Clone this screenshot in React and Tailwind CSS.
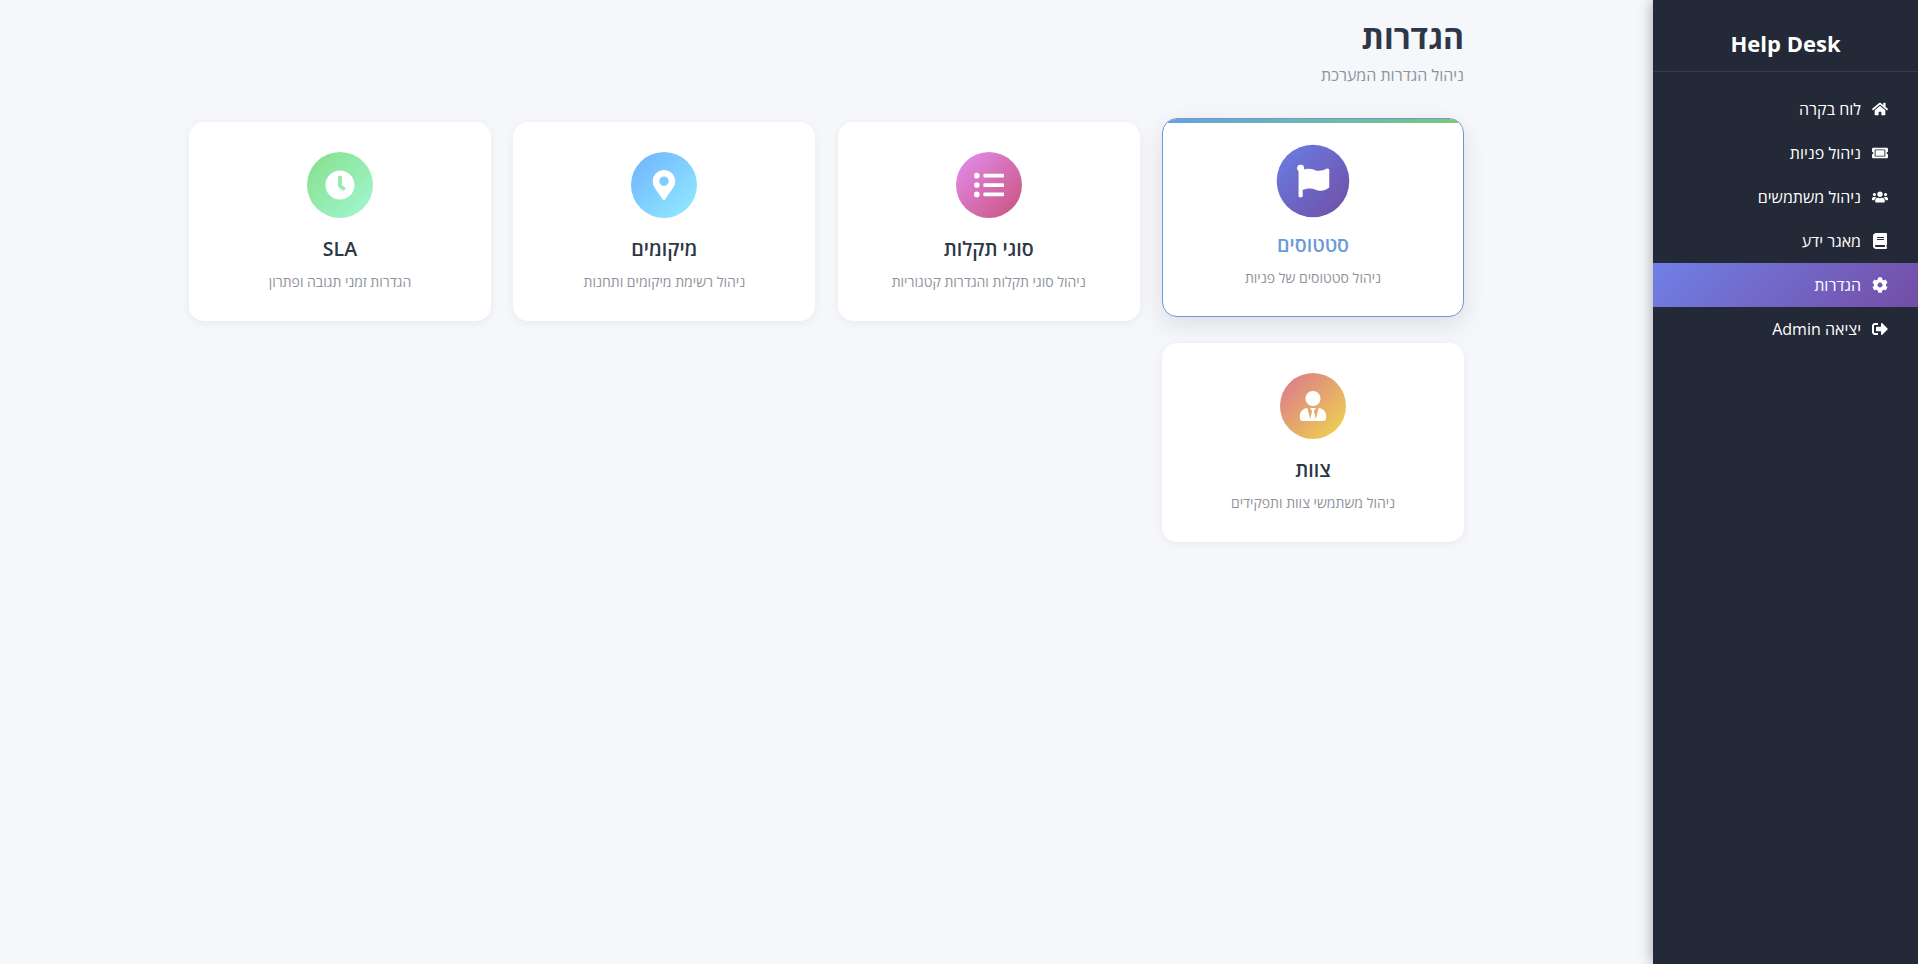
import React from 'react'
import { FaHome, FaTicketAlt, FaUsers, FaBook, FaCog, FaSignOutAlt, FaFlag, FaListUl, FaMapMarkerAlt, FaClock, FaUserTie } from 'react-icons/fa'

const NAV = [
  { Icon: FaHome, label: 'לוח בקרה' },
  { Icon: FaTicketAlt, label: 'ניהול פניות' },
  { Icon: FaUsers, label: 'ניהול משתמשים' },
  { Icon: FaBook, label: 'מאגר ידע' },
  { Icon: FaCog, label: 'הגדרות', active: true },
  { Icon: FaSignOutAlt, label: 'יציאה Admin' },
]

const CARDS = [
  { Icon: FaFlag, title: 'סטטוסים', desc: 'ניהול סטטוסים של פניות', grad: 'bg-[linear-gradient(135deg,#6a7fe6,#6f4da3)]', hovered: true },
  { Icon: FaListUl, title: 'סוגי תקלות', desc: 'ניהול סוגי תקלות והגדרות קטגוריות', grad: 'bg-[linear-gradient(135deg,#e48ef0,#c8527a)]' },
  { Icon: FaMapMarkerAlt, title: 'מיקומים', desc: 'ניהול רשימת מיקומים ותחנות', grad: 'bg-[linear-gradient(135deg,#6fb1ff,#93edff)]' },
  { Icon: FaClock, title: 'SLA', desc: 'הגדרות זמני תגובה ופתרון', grad: 'bg-[linear-gradient(135deg,#84e08a,#a2f7d2)]' },
  { Icon: FaUserTie, title: 'צוות', desc: 'ניהול משתמשי צוות ותפקידים', grad: 'bg-[linear-gradient(135deg,#dc7390,#efd94a)]' },
]

function Card({ Icon, title, desc, grad, hovered }) {
  return (
    <div
      className={`relative overflow-hidden rounded-[15px] bg-white border px-6 pt-[29px] pb-[28px] text-center flex flex-col items-center ${
        hovered
          ? '-translate-y-1 border-[#6b9bd6] shadow-[0_8px_24px_rgba(0,0,0,0.1)]'
          : 'border-transparent shadow-[0_2px_10px_rgba(0,0,0,0.06)]'
      }`}
    >
      {hovered && <div className="absolute top-0 inset-x-0 h-1 bg-gradient-to-r from-[#6a9fdc] to-[#7cc873]" />}
      <div
        className={`w-[66px] h-[66px] rounded-full ${grad} flex items-center justify-center text-white text-[30px] ${
          hovered ? 'scale-110' : ''
        }`}
      >
        <Icon />
      </div>
      <h3 className={`mt-[17px] text-[19.6px] leading-[28px] font-semibold ${hovered ? 'text-[#6a9bd8]' : 'text-[#2d3748]'}`}>{title}</h3>
      <p className="mt-[9px] text-[14px] leading-[20px] text-[#8f939b]">{desc}</p>
    </div>
  )
}

export default function App() {
  return (
    <div dir="rtl" className="flex h-screen overflow-hidden bg-[#f5f7fb] font-['Open_Sans','Noto_Sans','Liberation_Sans',sans-serif]">
      {/* תפריט צד */}
      <aside className="w-[265px] shrink-0 bg-[#232936] text-white shadow-[0_0_14px_rgba(0,0,0,0.35)]">
        <div className="h-[72px] pt-[15px] flex items-center justify-center border-b border-[#353b49]">
          <h2 className="text-[22px] font-bold" dir="ltr">Help Desk</h2>
        </div>
        <nav className="pt-[15px]">
          {NAV.map(({ Icon, label, active }) => (
            <div
              key={label}
              className={`h-11 pr-7 flex items-center gap-[9px] text-[16px] font-medium ${
                active ? 'bg-[linear-gradient(135deg,#7080e6,#744da6)]' : ''
              }`}
            >
              <span className="w-5 flex justify-center text-base shrink-0"><Icon /></span>
              <span>{label}</span>
            </div>
          ))}
        </nav>
      </aside>

      {/* תוכן */}
      <main className="flex-1 min-w-0">
        <div className="w-[1275px] mx-auto pt-[16px]">
          <h1 className="text-[32px] leading-[42px] font-bold text-[#2d3748]">הגדרות</h1>
          <p className="mt-[5px] text-[16px] leading-[24px] text-[#8f939b]">ניהול הגדרות המערכת</p>
          <div className="mt-[35px] grid grid-cols-4 gap-[22.4px]">
            {CARDS.map((c) => (
              <Card key={c.title} {...c} />
            ))}
          </div>
        </div>
      </main>
    </div>
  )
}
